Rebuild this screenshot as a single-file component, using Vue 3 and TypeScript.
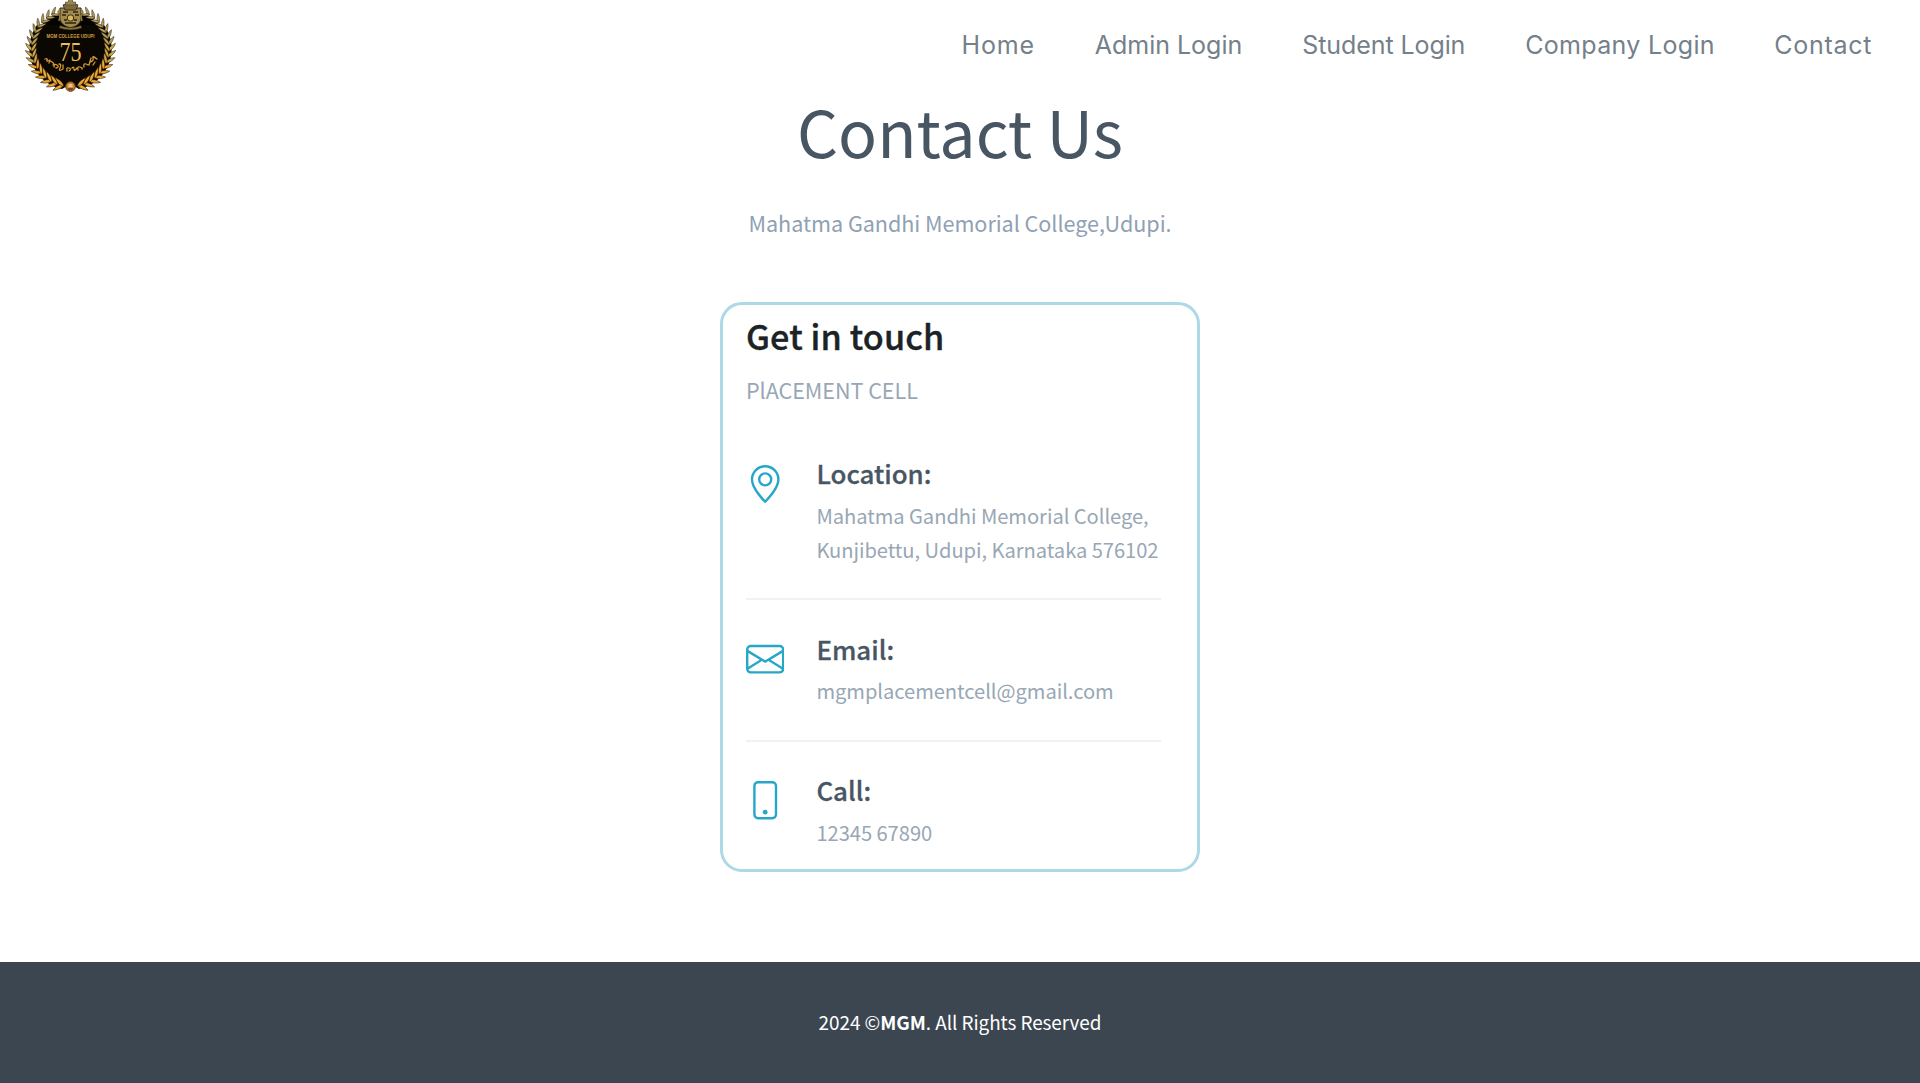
<script setup lang="ts">
interface NavItem {
  label: string
  width: number
  spacing: number
}

const navItems: NavItem[] = [
  { label: 'Home', width: 133.4, spacing: 0.9 },
  { label: 'Admin Login', width: 207.4, spacing: -0.02 },
  { label: 'Student Login', width: 223, spacing: -0.08 },
  { label: 'Company Login', width: 249, spacing: 0.32 },
  { label: 'Contact', width: 145.8, spacing: 0.75 },
]

// Laurel leaves run up both sides of the crest in pairs, starting at the bottom.
interface Leaf {
  transform: string
  color: string
}

const leaves: Leaf[] = []
const steps = 16
for (const side of [1, -1]) {
  for (let i = 0; i < steps; i++) {
    const t = i / (steps - 1)
    const deg = 12 + t * 140
    const a = (deg * Math.PI) / 180
    const x = 50.5 + side * 38.5 * Math.sin(a)
    const y = 48 + 38 * Math.cos(a)
    const color = t < 0.35 ? '#f0a634' : t < 0.6 ? '#d2a846' : '#b59e58'
    const size = 1.06 - t * 0.26
    for (const lean of [40, -34]) {
      const heading = side * (90 - deg + lean)
      leaves.push({
        transform: `translate(${x.toFixed(2)} ${y.toFixed(2)}) rotate(${heading.toFixed(1)}) scale(${size.toFixed(2)})`,
        color,
      })
    }
  }
}
</script>

<template>
  <div class="page">
    <header class="header">
      <svg class="logo" width="100" height="94" viewBox="0 0 100 94" role="img" aria-label="MGM College Udupi">
        <circle cx="50.5" cy="49" r="37.500" fill="#050402" />
        <path d="M17 25A41 41 0 0 0 42 89L50.500 84L59 89A41 41 0 0 0 84 25Z" fill="#0b0803" />
        <path
          v-for="(leaf, i) in leaves"
          :key="i"
          d="M0 1.500C-2.200-1-1.900-6 0-10.200C1.900-6 2.200-1 0 1.500Z"
          :transform="leaf.transform"
          :fill="leaf.color"
          stroke="#120c04"
          stroke-width="0.500"
        />
        <path d="M40 8h21v12q-2 6-10.500 8Q42 26 40 20Z" fill="#a08a4e" stroke="#2b2412" stroke-width="1" />
        <path d="M43 5q7-4 15 0l-2 5H45Z" fill="#7d6b3c" stroke="#2b2412" stroke-width="0.800" />
        <path d="M48.500-1h4v3h3v3h-10V2h3Z" fill="#9a8650" stroke="#4a4028" stroke-width="0.600" />
        <path d="M43 12h5M53 12h5M42 15h4M55 15h4M44 20h3M54 20h3M45 23h11" fill="none" stroke="#2b2412" stroke-width="1.500" />
        <path d="M40 9l-2 3 2 4-1 5M61 9l2 3-2 4 1 5" fill="none" stroke="#8e7a43" stroke-width="1.500" />
        <circle cx="50.500" cy="18" r="3.200" fill="#d8b75f" stroke="#3a2a10" stroke-width="1" />
        <path d="M40 25.500q10.500 4 21 0l1 2.500q-11.500 4-23 0Z" fill="#8b7438" stroke="#1c1608" stroke-width="0.600" />
        <text class="crest-name" x="50.500" y="37.800" textLength="48" lengthAdjust="spacingAndGlyphs">MGM COLLEGE UDUPI</text>
        <text class="crest-years" x="50.500" y="60.500" textLength="22" lengthAdjust="spacingAndGlyphs">75</text>
        <g fill="none" stroke="#d69a35" stroke-width="1.300" stroke-linecap="round" stroke-linejoin="round">
          <path d="M25 59q3-1 2 1t3 0M29 63q0-3 3-1t1 3M34 67q0-4 3-2t-1 3M39 64q3 0 1 4t3 1v-4" />
          <path d="M47 71q-1-4 2-3t0 3M52 68q2-2 2 1t3-1M58 70q-1-4 2-3t2 2M64 67q-1-4 2-3t2 1M69 65l2-7M70 62q4-1 3-4t4 1M75 62l-2 3" />
        </g>
        <circle cx="50.500" cy="86.500" r="4.800" fill="#c58432" stroke="#5c3310" stroke-width="1" />
        <circle cx="50.500" cy="86" r="2.300" fill="#ecc48c" />
        <path d="M47.500 88.500q3-2 6 0l-1.500 2h-3Z" fill="#894019" />
      </svg>
      <nav class="nav">
        <a
          v-for="item in navItems"
          :key="item.label"
          class="nav-link"
          :style="{ width: item.width + 'px', letterSpacing: item.spacing + 'px' }"
        >{{ item.label }}</a>
      </nav>
    </header>

    <main class="main">
      <h1 class="title">Contact Us</h1>
      <p class="subtitle">Mahatma Gandhi Memorial College,Udupi.</p>

      <section class="card">
        <h2 class="card-title">Get in touch</h2>
        <p class="card-sub">PlACEMENT CELL</p>

        <div class="entry">
          <svg class="icon pin" viewBox="0 0 16 16">
            <path d="M12.166 8.940c-.524 1.062-1.234 2.120-1.960 3.070A32 32 0 0 1 8 14.580a32 32 0 0 1-2.206-2.570c-.726-.950-1.436-2.008-1.960-3.070C3.304 7.867 3 6.862 3 6a5 5 0 0 1 10 0c0 .862-.305 1.867-.834 2.940M8 16s6-5.686 6-10A6 6 0 0 0 2 6c0 4.314 6 10 6 10" />
            <path d="M8 8a2 2 0 1 1 0-4 2 2 0 0 1 0 4m0 1a3 3 0 1 0 0-6 3 3 0 0 0 0 6" />
          </svg>
          <div>
            <h3 class="entry-title">Location:</h3>
            <p class="entry-text">Mahatma Gandhi Memorial College,<br />Kunjibettu, Udupi, Karnataka 576102</p>
          </div>
        </div>
        <hr class="rule" />
        <div class="entry">
          <svg class="icon" viewBox="0 0 16 16">
            <path d="M0 4a2 2 0 0 1 2-2h12a2 2 0 0 1 2 2v8a2 2 0 0 1-2 2H2a2 2 0 0 1-2-2zm2-1a1 1 0 0 0-1 1v.217l7 4.200 7-4.200V4a1 1 0 0 0-1-1zm13 2.383-4.708 2.825L15 11.105zm-.034 6.876-5.640-3.471L8 9.583l-1.326-.795-5.640 3.470A1 1 0 0 0 2 13h12a1 1 0 0 0 .966-.741M1 11.105l4.708-2.897L1 5.383z" />
          </svg>
          <div>
            <h3 class="entry-title">Email:</h3>
            <p class="entry-text">mgmplacementcell@gmail.com</p>
          </div>
        </div>
        <hr class="rule" />
        <div class="entry">
          <svg class="icon" viewBox="0 0 16 16">
            <path d="M11 1a1 1 0 0 1 1 1v12a1 1 0 0 1-1 1H5a1 1 0 0 1-1-1V2a1 1 0 0 1 1-1zM5 0a2 2 0 0 0-2 2v12a2 2 0 0 0 2 2h6a2 2 0 0 0 2-2V2a2 2 0 0 0-2-2z" />
            <path d="M8 14a1 1 0 1 0 0-2 1 1 0 0 0 0 2" />
          </svg>
          <div>
            <h3 class="entry-title">Call:</h3>
            <p class="entry-text">12345 67890</p>
          </div>
        </div>
      </section>
    </main>

    <footer class="footer">
      <p class="copyright">2024 ©<strong>MGM</strong>. All Rights Reserved</p>
    </footer>
  </div>
</template>

<style>
body {
  margin: 0;
  background: #fff;
}
</style>

<style scoped>
.page {
  display: flex;
  flex-direction: column;
  height: 1083px;
  overflow: hidden;
  font-family: 'Noto Sans CJK SC', 'Noto Sans', sans-serif;
  color: #485664;
}
h1,
h2,
h3,
p {
  margin: 0;
  font-weight: 400;
}
.header {
  display: flex;
  justify-content: space-between;
  height: 91px;
}
.logo {
  flex: none;
  margin-left: 20px;
}
.crest-name {
  font: 700 5.5px 'Liberation Sans', sans-serif;
  fill: #d3a044;
  text-anchor: middle;
}
.crest-years {
  font: 400 28px 'Liberation Serif', serif;
  fill: #e9bd57;
  text-anchor: middle;
}
.nav {
  display: flex;
  height: 89px;
  align-items: center;
}
.nav-link {
  font-family: Inter, sans-serif;
  font-size: 25px;
  line-height: 36px;
  white-space: nowrap;
  color: #74808a;
}
.main {
  display: flex;
  flex-direction: column;
  align-items: center;
  height: 871px;
}
.title {
  font-size: 64.5px;
  line-height: 78px;
  color: #485664;
}
.subtitle {
  margin-top: 36px;
  font-size: 21.6px;
  line-height: 36px;
  letter-spacing: -0.05px;
  color: #8fa1b3;
}
.card {
  box-sizing: border-box;
  width: 480px;
  height: 570px;
  margin-top: 61px;
  padding: 10px 36px 0 23px;
  border: 3px solid #add8e6;
  border-radius: 22px;
}
.card-title {
  font-size: 34.2px;
  font-weight: 500;
  line-height: 40px;
  letter-spacing: 0.1px;
  color: #1c2327;
  -webkit-text-stroke: 0.35px #1c2327;
}
.card-sub {
  margin-top: 18px;
  font-size: 21.6px;
  line-height: 34px;
  letter-spacing: -0.07px;
  color: #98a7b5;
}
.entry {
  display: flex;
  gap: 32px;
}
.card-sub + .entry {
  margin-top: 49px;
}
.icon {
  flex: none;
  width: 38.4px;
  height: 38.4px;
  margin-top: 8px;
  fill: #27a7c8;
}
.pin {
  margin-top: 9px;
}
.entry-title {
  font-size: 25.9px;
  font-weight: 500;
  line-height: 34px;
  color: #485664;
  -webkit-text-stroke: 0.3px #485664;
}
.entry-text {
  margin-top: 8.5px;
  font-size: 20.15px;
  line-height: 34.4px;
  letter-spacing: -0.05px;
  white-space: nowrap;
  color: #98a7b5;
}
.rule {
  height: 2px;
  margin: 31px 0 31.5px;
  border: 0;
  background: #eff1f2;
}
.footer {
  display: flex;
  flex: 1;
  justify-content: center;
  background: #3c4651;
}
.copyright {
  margin-top: 46px;
  font-size: 18.9px;
  line-height: 28px;
  letter-spacing: -0.05px;
  color: #fff;
}
.copyright strong {
  font-weight: 700;
}
</style>
